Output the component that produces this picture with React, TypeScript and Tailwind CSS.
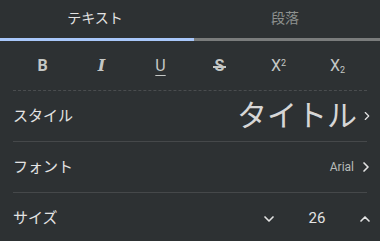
import { ChevronRight, ChevronDown, ChevronUp } from 'lucide-react';

const font = { fontFamily: '"Roboto", "Noto Sans CJK JP", sans-serif' };

function FormatButton({ children }: { children: React.ReactNode }) {
  return (
    <div className="flex items-center justify-center text-[16px] text-[#c4c7c5]">
      {children}
    </div>
  );
}

export default function App() {
  return (
    <div className="w-[380px] h-[241px] overflow-hidden bg-[#2d3133] text-[#e3e3e3]" style={font}>
      <div className="flex h-[38px]">
        <div className="flex-1 flex items-center justify-center text-[14px] text-[#e3e3e3] pb-[1px]">テキスト</div>
        <div className="flex-1 flex items-center justify-center text-[14px] text-[#8e918f] pb-[1px]">段落</div>
      </div>
      <div className="flex h-[3px]">
        <div className="w-[194px] bg-[#a8c7fa]" />
        <div className="flex-1 bg-[#7a7c7c]" />
      </div>
      <div className="px-[13px]">
        <div className="grid grid-cols-6 h-[50px] border-b border-dashed border-[#4a4d4f]">
          <FormatButton><span className="font-bold">B</span></FormatButton>
          <FormatButton><span className="italic font-bold" style={{ fontFamily: '"DejaVu Serif", serif' }}>I</span></FormatButton>
          <FormatButton><span className="underline underline-offset-4">U</span></FormatButton>
          <FormatButton>
            <span className="relative font-bold">
              S
              <span className="absolute left-[-2px] right-[-2px] top-1/2 h-[2px] bg-[#c4c7c5]" />
            </span>
          </FormatButton>
          <FormatButton><span>X<sup className="text-[9px] -top-[0.5em]">2</sup></span></FormatButton>
          <FormatButton><span>X<sub className="text-[9px]">2</sub></span></FormatButton>
        </div>
        <div className="flex items-center justify-between h-[51px] border-b border-[#45484a]">
          <span className="text-[15px]">スタイル</span>
          <div className="flex items-center -mr-[7px]">
            <span className="text-[30px] text-[#d6d6d6] leading-none">タイトル</span>
            <ChevronRight size={14} strokeWidth={2} className="text-[#e3e3e3] ml-[3px]" />
          </div>
        </div>
        <div className="flex items-center justify-between h-[51px] border-b border-[#45484a]">
          <span className="text-[15px]">フォント</span>
          <div className="flex items-center -mr-[7px]">
            <span className="text-[12px] text-[#b8bbb9]">Arial</span>
            <ChevronRight size={16} strokeWidth={2.5} className="text-[#e3e3e3] ml-[4px]" />
          </div>
        </div>
        <div className="flex items-center h-[51px]">
          <span className="text-[15px] flex-1">サイズ</span>
          <div className="flex items-center -mr-[10px]">
            <div className="w-[24px] flex justify-center">
              <ChevronDown size={16} strokeWidth={2.5} className="text-[#e3e3e3]" />
            </div>
            <span className="text-[15px] w-[72px] text-center">26</span>
            <div className="w-[24px] flex justify-center">
              <ChevronUp size={16} strokeWidth={2.5} className="text-[#e3e3e3]" />
            </div>
          </div>
        </div>
      </div>
    </div>
  );
}
